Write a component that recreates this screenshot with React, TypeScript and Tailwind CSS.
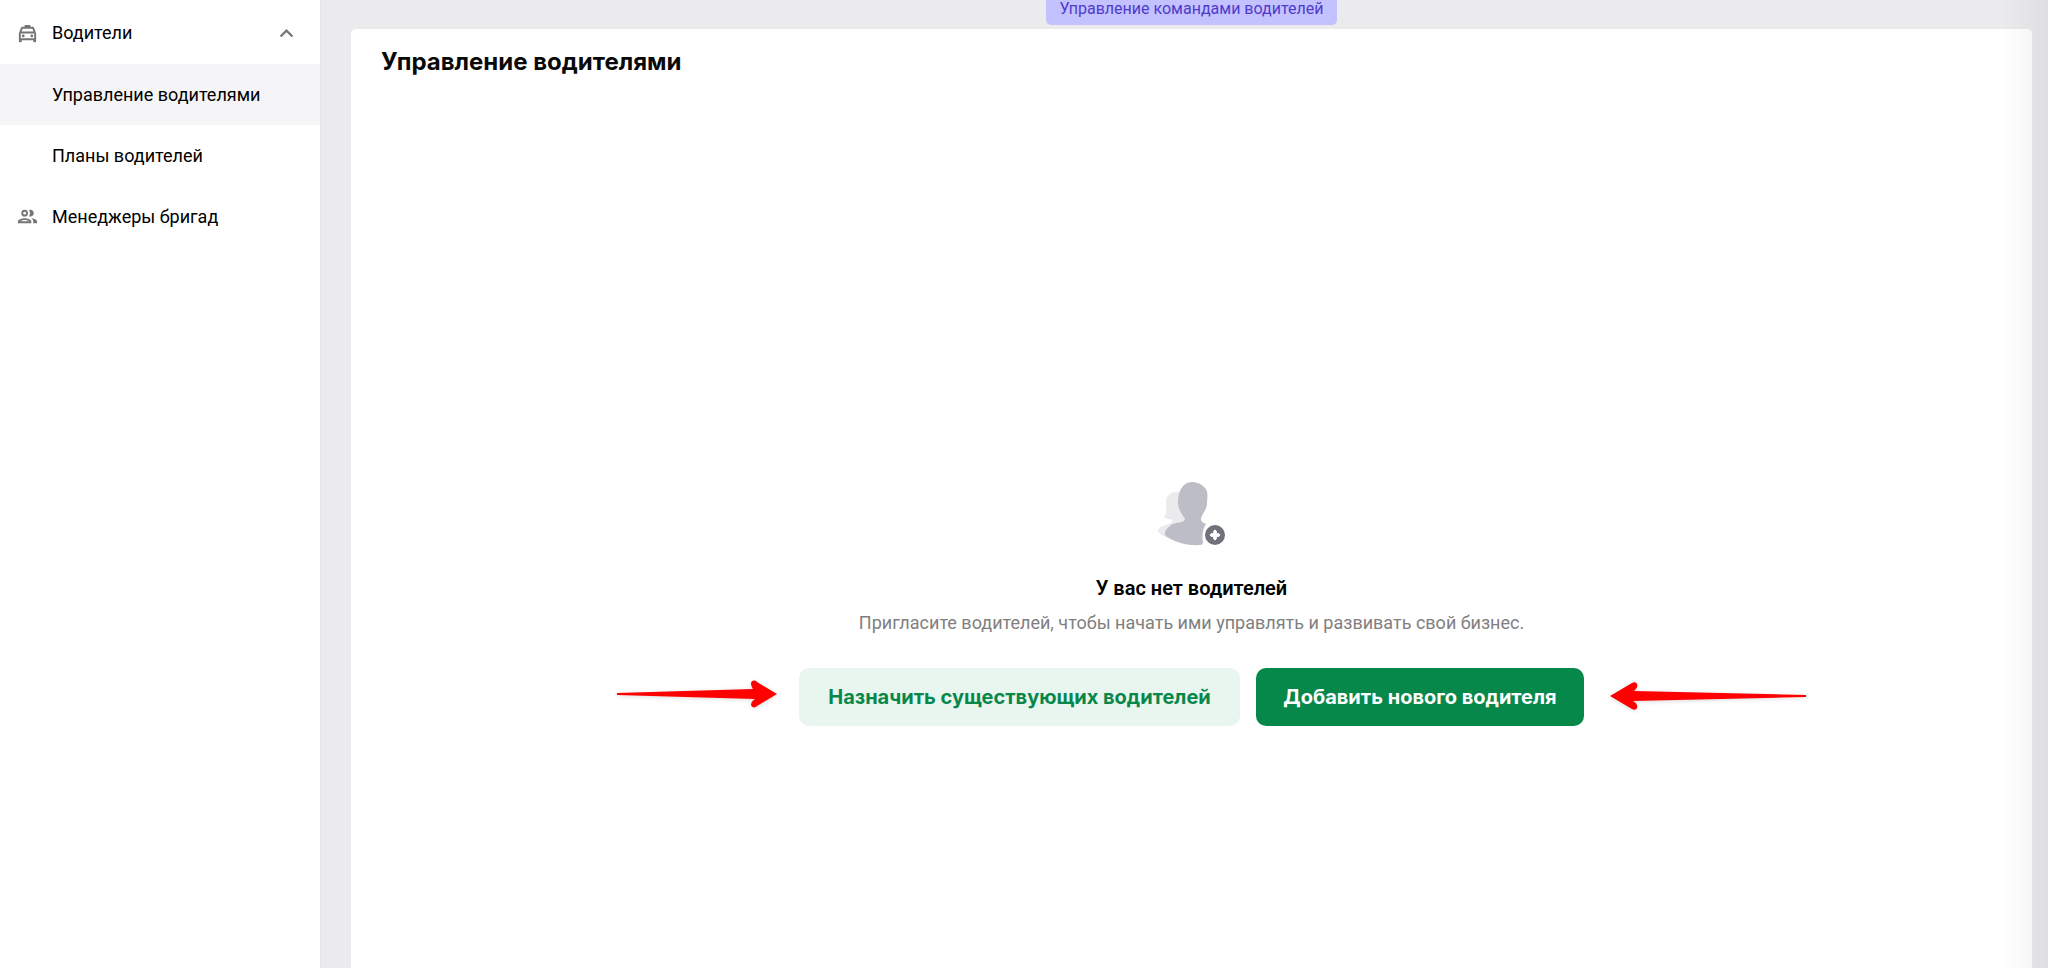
import type { ReactNode } from "react"
import { MdExpandLess, MdOutlineLocalTaxi } from "react-icons/md"

type MenuItemProps = {
    label: string
    icon?: ReactNode
    active?: boolean
}

const TeamIcon = () => (
    <svg width="23" height="23" viewBox="0 0 24 24" fill="currentColor" aria-hidden="true">
        <path
            fillRule="evenodd"
            d="M9 5a3.500 3.500 0 1 0 0 7a3.500 3.500 0 0 0 0-7zM9 7a1.500 1.500 0 1 1 0 3a1.500 1.500 0 0 1 0-3z"
        />
        <path
            fillRule="evenodd"
            d="M2 17.250C2 14.900 6.700 13.750 9 13.750S16 14.900 16 17.250V19H2zM4.340 17H13.660C12.800 16.400 10.700 15.750 9 15.750S5.200 16.400 4.340 17z"
        />
        <path d="M15 12a3.500 3.500 0 1 0-1.500-6.650a5.500 5.500 0 0 1 0 6.300C14 11.900 14.500 12 15 12z" />
        <path d="M16.040 13.810C17.200 14.650 18 15.770 18 17.250V19H22V17.250C22 15.230 18.500 14.080 16.040 13.810z" />
    </svg>
)

const MenuItem = ({ label, icon, active }: MenuItemProps) => (
    <li>
        <a
            href="#"
            aria-current={active ? "page" : undefined}
            className={`flex h-[61px] items-center pl-4 text-lg text-black ${active ? "bg-[#f5f5f7]" : ""}`}
        >
            <span className="w-9 shrink-0 text-[#757575]">{icon}</span>
            {label}
        </a>
    </li>
)

const Sidebar = () => (
    <nav className="w-80 shrink-0 bg-white">
        <button
            type="button"
            aria-expanded="true"
            className="flex h-16 w-full items-center pt-0.5 pr-5 pl-4 text-left text-lg text-black"
        >
            <span className="w-9 shrink-0 text-[#757575]">
                <MdOutlineLocalTaxi size={23} />
            </span>
            <span className="grow">Водители</span>
            <MdExpandLess size={27} className="text-[#757575]" />
        </button>
        <ul>
            <MenuItem label="Управление водителями" active />
            <MenuItem label="Планы водителей" />
            <MenuItem label="Менеджеры бригад" icon={<TeamIcon />} />
        </ul>
    </nav>
)

const NoDriversIcon = () => (
    <svg width="68" height="64" viewBox="0 0 68 64" aria-hidden="true">
        <path
            d="M22 10C14 9 8 13 8 20C8 27 9 31 6 35C9 38 14 36 14 39C14 43 0 43 0 49C1 52 5 54 10 56L36 50V14Z"
            fill="#ebebed"
        />
        <path
            d="M34 0C43 0 49 7 49 10C50 13 49 18 49 21C49 28 43 33 43 37C43 40 46 41 48 42C44 48 44 55 45 60C45 62 44 63 42 63C29 64 16 60 8 54C5 51 8 47 13 43C18 40 27 41 27 37C24 32 20 27 20 20C20 9 25 0 34 0Z"
            fill="#bdbdc6"
        />
        <circle cx="57" cy="53" r="10" fill="#71717d" />
        <path
            d="M57 48Q58.500 48 58.500 51.500Q62 51.500 62 53Q62 54.500 58.500 54.500Q58.500 58 57 58Q55.500 58 55.500 54.500Q52 54.500 52 53Q52 51.500 55.500 51.500Q55.500 48 57 48Z"
            fill="#fff"
            stroke="#fff"
        />
    </svg>
)

const ArrowRight = () => (
    <svg width="160" height="28" viewBox="0 0 160 28" className="drop-shadow-sm" aria-hidden="true">
        <path
            d="M0 13L136 9C134 6 134 4 134 3C135 0 138 0 140 2L160 14L140 26C138 28 135 28 134 25C134 23 135 21 138 19L0 15Z"
            fill="#fe0000"
        />
    </svg>
)

const ArrowLeft = () => (
    <svg width="196" height="28" viewBox="0 0 196 28" className="drop-shadow-sm" aria-hidden="true">
        <path
            d="M196 13L24 9C27 6 28 4 27 2C26 0 24 0 22 1L0 14L22 27C24 28 26 28 27 26C28 23 26 21 23 19L196 15Z"
            fill="#fe0000"
        />
    </svg>
)

const EmptyState = () => (
    <section className="flex flex-col items-center pt-[406px]">
        <NoDriversIcon />
        <h2 className="mt-7 text-xl leading-7 font-semibold text-black">У вас нет водителей</h2>
        <p className="mt-[9px] text-lg leading-6 text-[#808080]">
            Пригласите водителей, чтобы начать ими управлять и развивать свой бизнес.
        </p>
        <div className="mt-[33px] flex gap-4 font-['Inter',sans-serif] text-xl font-bold">
            <div className="relative">
                <button type="button" className="h-[58px] w-[441px] rounded-[10px] bg-[#e9f5ef] text-[#08874b]">
                    Назначить существующих водителей
                </button>
                <div className="pointer-events-none absolute top-3 right-full mr-[22px]">
                    <ArrowRight />
                </div>
            </div>
            <div className="relative">
                <button type="button" className="h-[58px] w-[328px] rounded-[10px] bg-[#06884b] text-white">
                    Добавить нового водителя
                </button>
                <div className="pointer-events-none absolute top-3.5 left-full ml-[26px]">
                    <ArrowLeft />
                </div>
            </div>
        </div>
    </section>
)

const App = () => {
    return (
        <div className="flex min-h-screen bg-[#ebebed] font-['Roboto',sans-serif]">
            <Sidebar />
            <div className="relative flex grow flex-col border-l border-[#e4e4e6] pr-4 pl-[30px]">
                <div className="mb-1 flex justify-center">
                    <span className="rounded-b-[5px] bg-[#c4c1ff] px-3.5 pb-2 text-base leading-[17px] text-[#4e3ccb]">
                        Управление командами водителей
                    </span>
                </div>
                <main className="grow rounded-t-[5px] bg-white">
                    <h1 className="px-[30px] pt-[18px] font-['Inter',sans-serif] text-2xl leading-[29px] font-bold text-[#080a0a]">
                        Управление водителями
                    </h1>
                    <EmptyState />
                </main>
                <div className="pointer-events-none absolute inset-y-0 right-0 w-12 bg-linear-to-r from-transparent to-black/5" />
            </div>
        </div>
    )
}

export default App
